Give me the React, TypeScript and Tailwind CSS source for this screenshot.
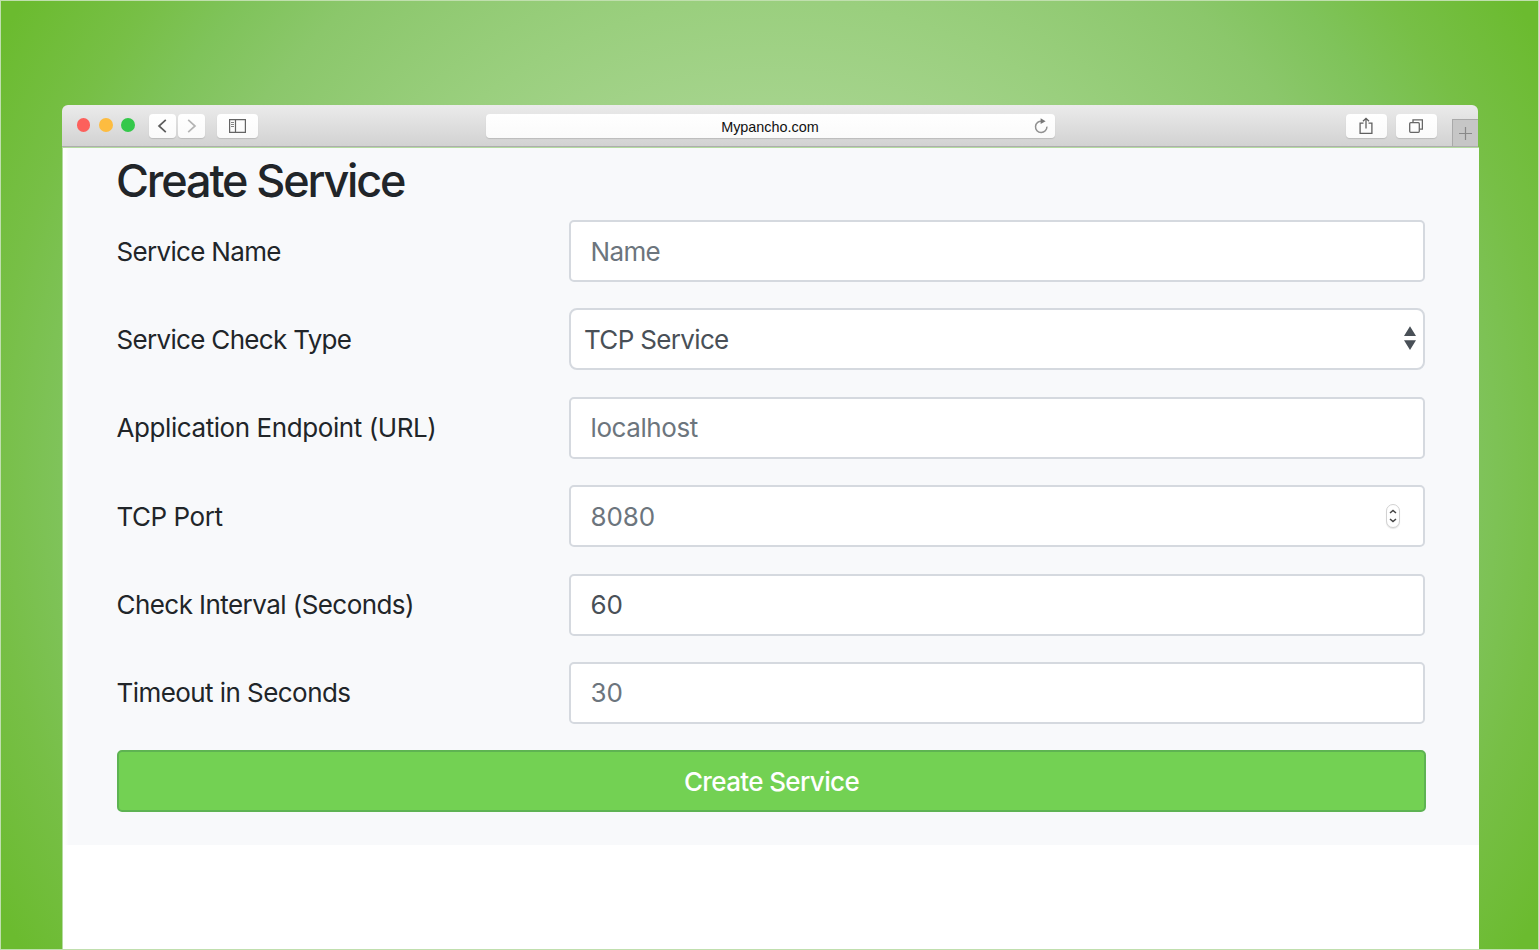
import React from "react";

type FieldRow = { label: string; value?: string; placeholder?: string; kind?: "select" | "number"; lw: string; vw: string };

const rows: FieldRow[] = [
  { label: "Service Name", placeholder: "Name", lw: "tracking-[-0.68px]", vw: "tracking-[-0.65px]" },
  { label: "Service Check Type", value: "TCP Service", kind: "select", lw: "tracking-[-0.68px]", vw: "tracking-[-0.66px]" },
  { label: "Application Endpoint (URL)", placeholder: "localhost", lw: "tracking-[-0.42px]", vw: "tracking-[-0.42px]" },
  { label: "TCP Port", placeholder: "8080", kind: "number", lw: "tracking-[-0.47px]", vw: "tracking-[-0.1px]" },
  { label: "Check Interval (Seconds)", value: "60", lw: "tracking-[-0.56px]", vw: "tracking-[0px]" },
  { label: "Timeout in Seconds", placeholder: "30", lw: "tracking-[-0.56px]", vw: "tracking-[0px]" },
];

const toolButton = "flex h-6 items-center justify-center rounded-[4px] bg-gradient-to-b from-white to-[#fafafa] shadow-[0_1px_1px_rgba(0,0,0,0.13)]";

function TitleBar() {
  return (
    <header className="flex h-[42px] w-[1416px] shrink-0 items-start rounded-t-[6px] border-b border-[#adadad] bg-gradient-to-b from-[#ebebeb] to-[#d2d2d2] pt-[9px]">
      <div className="ml-[14.5px] mt-[4px] flex gap-[8.6px]">
        <span className="size-[13.8px] rounded-full bg-[#fc605c]" />
        <span className="size-[13.8px] rounded-full bg-[#fdbc40]" />
        <span className="size-[13.8px] rounded-full bg-[#34c84a]" />
      </div>
      <div className="ml-[13.9px] flex gap-[2px]">
        <button className={`${toolButton} w-[27px]`}>
          <svg className="-ml-px" width="10" height="14" viewBox="0 0 10 14" fill="none" stroke="#5c5c5c" strokeWidth="1.7"><path d="M8.8 .8 2 7l6.8 6.2" /></svg>
        </button>
        <button className={`${toolButton} w-[27px]`}>
          <svg className="ml-px" width="10" height="14" viewBox="0 0 10 14" fill="none" stroke="#b4b4b4" strokeWidth="1.7"><path d="M1.2 .8 8 7l-6.8 6.2" /></svg>
        </button>
      </div>
      <button className={`${toolButton} ml-[12px] w-[41px]`}>
        <svg width="17" height="14" viewBox="0 0 17 14" fill="none" stroke="#646464">
          <path d="M.6.6h15.8v12.8H.6zM6.5.6v12.8" strokeWidth="1.2" />
          <path d="M2 3.5h3M2 5.5h3M2 7.5h3" strokeWidth=".8" />
        </svg>
      </button>
      <div className="ml-[228px] flex h-6 w-[569px] items-center rounded-[4px] bg-gradient-to-b from-white to-[#fafafa] shadow-[0_1px_1px_rgba(0,0,0,0.13)]">
        <span className="flex-1 pl-[20px] pt-[2px] text-center font-['Liberation_Sans'] text-[14.4px] leading-5 text-[#111]">Mypancho.com</span>
        <svg className="mr-[7px]" width="14" height="16" viewBox="0 0 14 16" fill="none">
          <path d="M8 3.2A5.7 5.7 0 1 0 12.9 8.6" stroke="#909090" strokeWidth="1.5" />
          <path d="M6.6.3 11.6 3.2 6.6 6z" fill="#777" />
        </svg>
      </div>
      <button className={`${toolButton} ml-[291px] w-[41px]`}>
        <svg width="14" height="18" viewBox="0 0 14 18" fill="none" stroke="#5f5f5f" strokeWidth="1.3">
          <path d="M4.5 6.1H1.1v10.3h11.8V6.1H9.5M7 11.5V1.4M4 4.3 7 1.3l3 3" />
        </svg>
      </button>
      <button className={`${toolButton} ml-[9px] w-[41px]`}>
        <svg className="-ml-px" width="14" height="14" viewBox="0 0 14 14" fill="none" stroke="#666" strokeWidth="1.3">
          <rect x=".7" y="3.7" width="9.6" height="9.6" rx="1" /><path d="M4 3.3V.8h9.4v9.4h-2.7" />
        </svg>
      </button>
      <div className="ml-auto mt-[5px] flex h-[27px] w-[26px] items-center justify-center border-l border-t border-[#a9a9a9] bg-[#c6c6c6]">
        <svg width="13" height="13" viewBox="0 0 13 13" stroke="#888" strokeWidth="1.2"><path d="M6.5 0v13M0 6.5h13" /></svg>
      </div>
    </header>
  );
}

function Field({ row }: { row: FieldRow }) {
  const tone = row.value ? "text-[#495057]" : "text-[#6c757d]";
  const shape = row.kind === "select" ? "rounded-[8px] pl-[13px] pr-[7px]" : "rounded-[5px] pl-[19.5px] pr-[23px]";
  return (
    <div className="flex h-[62px] items-center">
      <label className={`-ml-[0.5px] w-[452.5px] shrink-0 whitespace-nowrap text-[#212529] ${row.lw}`}>{row.label}</label>
      <div className={`flex h-[62px] w-[856px] items-center justify-between border-2 border-[#d5d9df] bg-white ${shape} ${tone}`}>
        <span className={row.vw}>{row.value ?? row.placeholder}</span>
        {row.kind === "select" && (
          <svg className="-mt-[2px]" width="12" height="24" viewBox="0 0 12 24" fill="#495057"><path d="M6 .3 12 10H0zM0 14.3h12L6 24z" /></svg>
        )}
        {row.kind === "number" && (
          <span className="flex h-[24px] w-[14px] items-center justify-center rounded-full border border-[#d2d2d2] bg-white shadow-[0_1px_1px_rgba(0,0,0,0.1)]">
            <svg width="8" height="14" viewBox="0 0 8 14" fill="none" stroke="#444" strokeWidth="1.5"><path d="M1 4l3-2.6L7 4M1 10l3 2.6L7 10" /></svg>
          </span>
        )}
      </div>
    </div>
  );
}

export default function App() {
  return (
    <main className="flex h-[950px] w-[1539px] flex-col overflow-hidden border border-[#c0dfae] bg-[radial-gradient(circle_at_769px_474px,#c4e4b6_0px,#a4d38b_375px,#9acf7e_475px,#8bc76b_630px,#7fc35a_710px,#77bf46_780px,#6bbb2f_885px)] pl-[61px] pt-[104px] font-['Inter',sans-serif] text-[26px] font-[420]">
      <section className="flex w-[1417px] flex-1 flex-col">
        <TitleBar />
        <div className="flex flex-1 flex-col border-l border-t border-[#b4dba0] bg-white">
          <div className="h-[697px] shrink-0 bg-[linear-gradient(to_right,#fff_0px,#fdfdfe_3px,#f8f9fb_6px)] pl-[54px]">
            <h1 className="-ml-px h-[72px] whitespace-nowrap pt-[5px] text-[45px] font-medium leading-[56px] tracking-[-2.15px] text-[#212529]">Create Service</h1>
            <form className="flex flex-col gap-[26.4px]" onSubmit={(e) => e.preventDefault()}>
              {rows.map((r) => <Field key={r.label} row={r} />)}
              <button className="h-[62px] w-[1309px] rounded-[5px] border-2 border-[#5eb352] bg-[#73d153] font-[450] tracking-[-0.63px] text-white">Create Service</button>
            </form>
          </div>
        </div>
      </section>
    </main>
  );
}
